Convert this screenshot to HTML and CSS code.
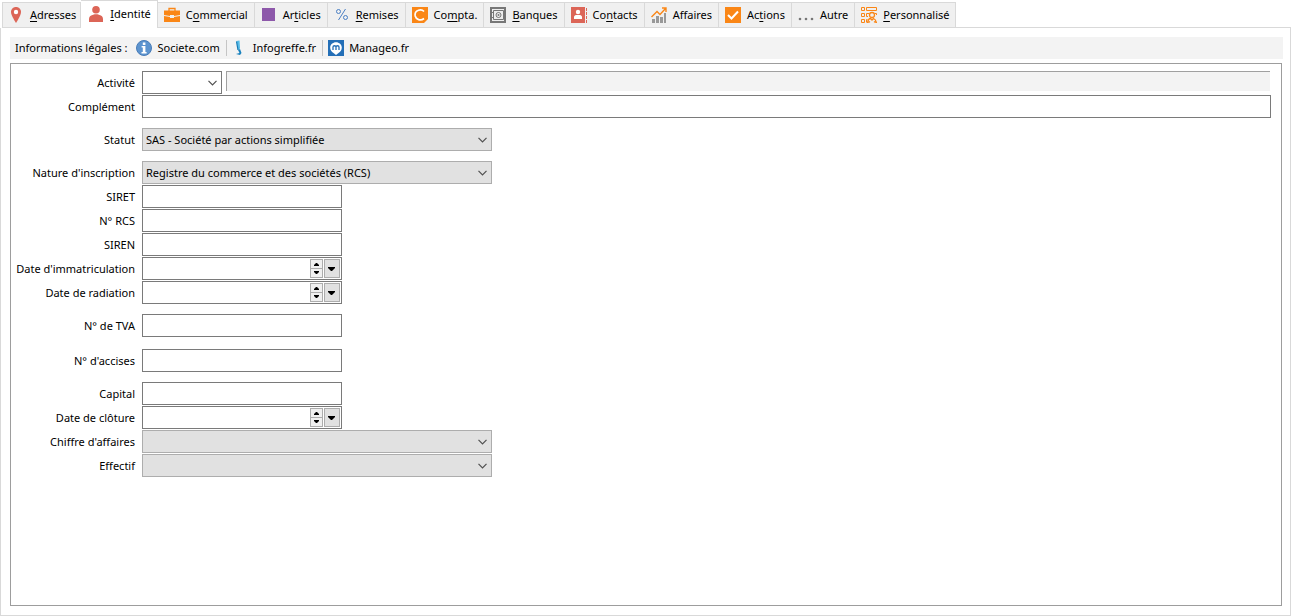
FILE: index.html
```
<!DOCTYPE html>
<html lang="fr">
<head>
    <meta charset="UTF-8">
    <meta name="viewport" content="width=device-width, initial-scale=1.0">
    <title>Fiche client - Identité</title>
    <link rel="stylesheet" href="styles.css">
</head>
<body>
    <svg class="defs" aria-hidden="true">
        <symbol id="chevron" viewBox="0 0 9 6"><path d="M0.5 0.8L4.5 4.8L8.5 0.8" fill="none" stroke="#505050" stroke-width="1.2"/></symbol>
        <symbol id="up" viewBox="0 0 7 4"><path d="M1 4H6V3L4 1H3L1 3Z" fill="#000"/></symbol>
        <symbol id="down" viewBox="0 0 8 4"><path d="M0 0H7V1L4 4H3L0 1Z" fill="#000"/></symbol>
    </svg>

    <nav class="tabs">
        <button class="tab">
            <svg class="icon" viewBox="0 0 16 16"><path d="M8 0C5 0 3 2.200 3 5C3 8.500 8 16 8 16S13 8.500 13 5C13 2.200 11 0 8 0Z" fill="#dc6557"/><circle cx="8" cy="5" r="2.200" fill="#fff"/></svg>
            <span><u>A</u>dresses</span>
        </button>
        <button class="tab active">
            <svg class="icon" viewBox="0 0 16 16"><circle cx="8" cy="3.800" r="3.800" fill="#dc6557"/><path d="M1 16V13C1 10.500 2.500 9.500 4.500 9L6.500 8.200H9.500L11.500 9C13.500 9.500 15 10.500 15 13V16Z" fill="#dc6557"/></svg>
            <span><u>I</u>dentité</span>
        </button>
        <button class="tab">
            <svg class="icon" viewBox="0 0 16 16"><path d="M5 4V1.500H11V4" fill="none" stroke="#fa8616" stroke-width="1.300"/><path d="M0 3.500H16V8L10 9V8H6V9L0 8ZM0 9L6 10V11H10V10L16 9V15H0Z" fill="#fa8616"/></svg>
            <span>C<u>o</u>mmercial</span>
        </button>
        <button class="tab">
            <svg class="icon" viewBox="0 0 16 16"><path d="M1 1H14V14H1Z" fill="#8d58aa"/></svg>
            <span>Ar<u>t</u>icles</span>
        </button>
        <button class="tab">
            <svg class="icon" viewBox="0 0 16 16"><g fill="none" stroke="#4a7fc4"><circle cx="4.500" cy="4.500" r="2"/><circle cx="11.500" cy="10.500" r="2"/><path d="M11.500 2L4.500 13"/></g></svg>
            <span><u>R</u>emises</span>
        </button>
        <button class="tab">
            <svg class="icon" viewBox="0 0 16 16"><path d="M0 0H16V12L12 16H0Z" fill="#fa8616"/><path d="M12 4.500C10.500 2.800 8.500 2.600 6.500 3.200C3.500 4.300 2.800 7 3.200 9C4 12.500 8.500 14.300 12 11.500" fill="none" stroke="#fff" stroke-width="1.700"/></svg>
            <span>Co<u>m</u>pta.</span>
        </button>
        <button class="tab">
            <svg class="icon" viewBox="0 0 16 16"><path d="M1 1H15V15H1Z" fill="#eee" stroke="#777" stroke-width="2"/><path d="M3.500 3.500H13.500V12.500H3.500Z" fill="none" stroke="#777"/><circle cx="8.500" cy="8" r="2.500" fill="none" stroke="#777"/><circle cx="8.500" cy="8" r="1" fill="#777"/><path d="M2 5V6M2 10V11" stroke="#777" stroke-width="2"/></svg>
            <span><u>B</u>anques</span>
        </button>
        <button class="tab">
            <svg class="icon" viewBox="0 0 16 16"><path d="M0 0H14V16H0Z" fill="#dc6557"/><path d="M15.500 1V16" stroke="#dc6557" stroke-dasharray="3 1"/><circle cx="7" cy="5" r="2.200" fill="#fff"/><path d="M3 12V10C3 9 4 8 5 8H9C10 8 11 9 11 10V12Z" fill="#fff"/></svg>
            <span>Co<u>n</u>tacts</span>
        </button>
        <button class="tab">
            <svg class="icon" viewBox="0 0 16 16"><path d="M1 12H4V16H1ZM5 9H8V16H5ZM9 10H12V16H9ZM13 6H15V16H13Z" fill="#999"/><path d="M0.500 10L6 4.500L9 7.500L15 1M11 1H15V5" fill="none" stroke="#fa8616" stroke-width="1.400"/></svg>
            <span>Affaires</span>
        </button>
        <button class="tab">
            <svg class="icon" viewBox="0 0 16 16"><path d="M0 0H16V16H0Z" fill="#fa8616"/><path d="M3 8L6.500 11.500L13 4.500" fill="none" stroke="#fff" stroke-width="2"/></svg>
            <span>Ac<u>t</u>ions</span>
        </button>
        <button class="tab">
            <svg class="icon" viewBox="0 0 16 16"><g fill="#777"><circle cx="2" cy="12" r="1.300"/><circle cx="8" cy="12" r="1.300"/><circle cx="14" cy="12" r="1.300"/></g></svg>
            <span>Autre</span>
        </button>
        <button class="tab">
            <svg class="icon" viewBox="0 0 16 16"><g fill="none" stroke="#fa8616"><path d="M0.500 0.500H3.500V3.500H0.500ZM5.500 0.500H15.500V3.500H5.500ZM0.500 6.500H3.500V9.500H0.500ZM0.500 12.500H3.500V15.500H0.500ZM8 6.500H5.500V9.500H7M6.500 12.500H5.500V15.500M14 6.500H15.500V8"/><circle cx="11" cy="8" r="2.500" stroke-width="1.300"/><path d="M6.500 16C7 13 8.500 11.500 9.500 11.500L11 13L12.500 11.500C14 12 15 13.500 15.500 16M9 14.500L7.500 15.500M13 14.500L14.500 15.500" stroke-width="1.300"/></g></svg>
            <span><u>P</u>ersonnalisé</span>
        </button>
    </nav>

    <main class="page">
        <div class="legal">
            <span class="legal-title">Informations légales :</span>
            <a href="#societe">
                <svg class="icon" viewBox="0 0 16 16"><circle cx="8" cy="8" r="7.500" fill="#5d94cf" stroke="#487cb8"/><path d="M6.800 2.500H9.400V4.900H6.800ZM5.600 6H9.400V12H10.600V13.500H5.500V12H6.800V7.400H5.600Z" fill="#fff"/></svg>
                Societe.com
            </a>
            <a href="#infogreffe">
                <svg class="icon" viewBox="0 0 16 16"><path d="M4.500 1L7.500 0.500L8 8.500L6 10Z" fill="#56bce8"/><path d="M4.500 1.500L6 10" stroke="#167ab5" stroke-width="1.200"/><path d="M6 10L8 9L9.500 13L8 15L4 14L7.500 13Z" fill="#1881bd"/></svg>
                Infogreffe.fr
            </a>
            <a href="#manageo">
                <svg class="icon" viewBox="0 0 16 16"><path d="M0 0H16V16H0Z" fill="#246fb7"/><path d="M8 15L5.500 13C3.500 12 2.200 10 2.200 7.500C2.200 4.500 4.800 2.200 8 2.200S13.800 4.500 13.800 7.500C13.800 10 12.500 12 10.500 13Z" fill="#fff"/><path d="M5 10V7C5 5.300 8 5.300 8 7V10M8 7C8 5.300 11 5.300 11 7V10" fill="none" stroke="#246fb7" stroke-width="1.300"/></svg>
                Manageo.fr
            </a>
        </div>

        <form class="panel">
            <div class="group">
                <div class="row">
                    <label for="activite">Activité</label>
                    <span class="select code">
                        <select id="activite"><option></option></select>
                        <svg><use href="#chevron"/></svg>
                    </span>
                    <input class="readonly" type="text" aria-label="Libellé de l'activité" readonly>
                </div>
                <div class="row">
                    <label for="complement">Complément</label>
                    <input class="wide" type="text" id="complement">
                </div>
            </div>

            <div class="group">
                <div class="row">
                    <label for="statut">Statut</label>
                    <span class="select">
                        <select id="statut"><option>SAS - Société par actions simplifiée</option></select>
                        <svg><use href="#chevron"/></svg>
                    </span>
                </div>
            </div>

            <div class="group">
                <div class="row">
                    <label for="nature">Nature d'inscription</label>
                    <span class="select">
                        <select id="nature"><option>Registre du commerce et des sociétés (RCS)</option></select>
                        <svg><use href="#chevron"/></svg>
                    </span>
                </div>
                <div class="row">
                    <label for="siret">SIRET</label>
                    <input type="text" id="siret">
                </div>
                <div class="row">
                    <label for="rcs">N° RCS</label>
                    <input type="text" id="rcs">
                </div>
                <div class="row">
                    <label for="siren">SIREN</label>
                    <input type="text" id="siren">
                </div>
                <div class="row">
                    <label for="immatriculation">Date d'immatriculation</label>
                    <div class="date">
                        <input type="text" id="immatriculation">
                        <div class="spin">
                            <button type="button" aria-label="Plus"><svg><use href="#up"/></svg></button>
                            <button type="button" aria-label="Moins"><svg class="flip"><use href="#up"/></svg></button>
                        </div>
                        <button type="button" class="drop" aria-label="Calendrier"><svg><use href="#down"/></svg></button>
                    </div>
                </div>
                <div class="row">
                    <label for="radiation">Date de radiation</label>
                    <div class="date">
                        <input type="text" id="radiation">
                        <div class="spin">
                            <button type="button" aria-label="Plus"><svg><use href="#up"/></svg></button>
                            <button type="button" aria-label="Moins"><svg class="flip"><use href="#up"/></svg></button>
                        </div>
                        <button type="button" class="drop" aria-label="Calendrier"><svg><use href="#down"/></svg></button>
                    </div>
                </div>
            </div>

            <div class="group">
                <div class="row">
                    <label for="tva">N° de TVA</label>
                    <input type="text" id="tva">
                </div>
            </div>

            <div class="group spaced">
                <div class="row">
                    <label for="accises">N° d'accises</label>
                    <input type="text" id="accises">
                </div>
            </div>

            <div class="group">
                <div class="row">
                    <label for="capital">Capital</label>
                    <input type="text" id="capital">
                </div>
                <div class="row">
                    <label for="cloture">Date de clôture</label>
                    <div class="date">
                        <input type="text" id="cloture">
                        <div class="spin">
                            <button type="button" aria-label="Plus"><svg><use href="#up"/></svg></button>
                            <button type="button" aria-label="Moins"><svg class="flip"><use href="#up"/></svg></button>
                        </div>
                        <button type="button" class="drop" aria-label="Calendrier"><svg><use href="#down"/></svg></button>
                    </div>
                </div>
                <div class="row">
                    <label for="chiffre">Chiffre d'affaires</label>
                    <span class="select">
                        <select id="chiffre"><option></option></select>
                        <svg><use href="#chevron"/></svg>
                    </span>
                </div>
                <div class="row">
                    <label for="effectif">Effectif</label>
                    <span class="select">
                        <select id="effectif"><option></option></select>
                        <svg><use href="#chevron"/></svg>
                    </span>
                </div>
            </div>
        </form>
    </main>
</body>
</html>
```
FILE: styles.css
```
* {
    box-sizing: border-box;
}
body {
    display: flex;
    flex-direction: column;
    min-height: 100vh;
    margin: 0;
    background-color: #fff;
    color: #000;
    font-family: "Noto Sans", sans-serif;
    font-size: 11px;
    line-height: 16px;
}
button, input, select {
    margin: 0;
    padding: 0;
    border: none;
    border-radius: 0;
    color: #000;
    font: inherit;
}
.defs {
    position: absolute;
    width: 0;
    height: 0;
}
.icon {
    flex: none;
    width: 16px;
    height: 16px;
}

/* Tabs */
.tabs {
    display: flex;
    align-items: flex-end;
    height: 28px;
    padding-left: 2px;
}
.tab {
    display: flex;
    align-items: center;
    gap: 6px;
    height: 26px;
    padding: 0 6px;
    border: 1px solid #d9d9d9;
    border-left: none;
    background-color: #f0f0f0;
    white-space: nowrap;
}
.tab:first-child {
    border-left: 1px solid #d9d9d9;
    padding: 0 4px 0 5px;
}
.tab.active {
    height: 28px;
    padding: 0 6px 2px 7px;
    border-bottom: none;
    background-color: #fff;
}
.tab u {
    text-underline-offset: 2px;
}

/* Continues the bottom line of the tabs up to the right edge */
.tabs::after {
    content: "";
    flex: 1;
    border-bottom: 1px solid #d9d9d9;
}

/* Page */
.page {
    display: flex;
    flex: 1;
    flex-direction: column;
    gap: 4px;
    padding: 9px 7px 9px 9px;
    border: 1px solid #d9d9d9;
    border-top: none;
}
.legal {
    display: flex;
    align-items: center;
    height: 22px;
    padding-left: 5px;
    background-color: #f3f3f3;
}
.legal-title {
    margin-right: 4px;
}
.legal a {
    display: flex;
    align-items: center;
    gap: 5px;
    padding: 0 6px 0 5px;
    color: #000;
    text-decoration: none;
}
.legal a + a {
    border-left: 1px solid #c5c5c5;
}

/* Form */
.panel {
    display: flex;
    flex: 1;
    flex-direction: column;
    gap: 10px;
    margin-right: 1px;
    padding: 7px 10px 10px 0;
    border: 1px solid #9d9d9d;
}
.group {
    display: flex;
    flex-direction: column;
    gap: 1px;
}
.group.spaced {
    margin-top: 2px;
}
.row {
    display: flex;
    height: 23px;
}
.row label {
    flex: none;
    width: 124px;
    margin-right: 7px;
    line-height: 23px;
    text-align: right;
    white-space: nowrap;
}
.row input {
    width: 200px;
    padding: 0 3px;
    border: 1px solid #7a7a7a;
    background-color: #fff;
}
.row .wide {
    flex: 1;
}
.row .readonly {
    flex: 1;
    height: 20px;
    margin: 0 1px 0 4px;
    border: none;
    border-top: 1px solid #a0a0a0;
    border-left: 1px solid #a0a0a0;
    background-color: #f3f3f3;
}
.select {
    position: relative;
    width: 350px;
}
.select select {
    width: 100%;
    height: 100%;
    padding: 0 20px 0 3px;
    border: 1px solid #adadad;
    background-color: #e1e1e1;
    appearance: none;
}
.select svg {
    position: absolute;
    top: 9px;
    right: 5px;
    width: 9px;
    height: 6px;
    pointer-events: none;
}
.select.code {
    width: 80px;
}
.select.code select {
    border-color: #7a7a7a;
    background-color: #fff;
}
.date {
    display: flex;
    gap: 1px;
    width: 200px;
    padding: 1px;
    border: 1px solid #7a7a7a;
}
.row .date input {
    flex: 1;
    min-width: 0;
    border: none;
}
.date button {
    display: flex;
    align-items: center;
    justify-content: center;
    border: 1px solid #adadad;
    background-color: #f0f0f0;
}
.spin {
    display: flex;
    flex-direction: column;
    width: 13px;
}
.spin button {
    flex: 1;
}
.spin button + button {
    border-top: none;
}
.date .drop {
    width: 16px;
    background-color: #e1e1e1;
}
.date svg {
    width: 7px;
    height: 4px;
}
.date .drop svg {
    width: 8px;
}
.date .flip {
    transform: rotate(180deg);
}
```
